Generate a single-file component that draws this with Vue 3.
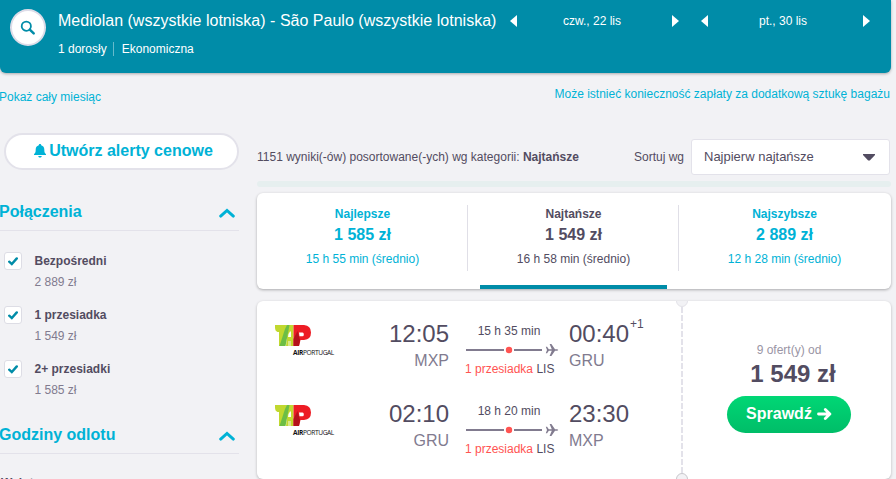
<template>
  <div class="page">
    <header class="search-bar">
      <button class="search-btn" aria-label="Szukaj">
        <svg width="16" height="16" viewBox="0 0 16 16">
          <circle cx="6.3" cy="6.2" r="4.6" fill="none" stroke="#008ca8" stroke-width="1.8" />
          <path d="M9.8 9.7 L13.7 13.4" stroke="#008ca8" stroke-width="2.5" stroke-linecap="round" />
        </svg>
      </button>
      <div class="search-info">
        <div class="route">Mediolan (wszystkie lotniska) - São Paulo (wszystkie lotniska)</div>
        <div class="details">
          <span class="adults">1 dorosły</span>
          <span class="cabin">Ekonomiczna</span>
        </div>
      </div>
      <div class="dates">
        <div v-for="d in dates" :key="d" class="date">
          <svg width="7" height="12" viewBox="0 0 7 12"><path d="M7 0v12L0 6z" fill="#fff" /></svg>
          <span>{{ d }}</span>
          <svg width="7" height="12" viewBox="0 0 7 12"><path d="M0 0v12L7 6z" fill="#fff" /></svg>
        </div>
      </div>
    </header>

    <div class="links">
      <a class="month">Pokaż cały miesiąc</a>
      <a class="baggage">Może istnieć konieczność zapłaty za dodatkową sztukę bagażu</a>
    </div>

    <div class="columns">
      <aside class="sidebar">
        <button class="alert-btn">
          <svg width="12" height="14" viewBox="0 0 12 14">
            <path
              d="M6 0c.8 0 1.2.5 1.2 1.2C9.3 1.8 10.3 3.4 10.3 5.6c0 2.6.4 3.7 1.7 4.6v.9H0v-.9c1.3-.9 1.7-2 1.7-4.6 0-2.2 1-3.8 3.1-4.4C4.8.5 5.2 0 6 0zM4.2 12h3.6c-.3 1-.9 1.5-1.8 1.5S4.5 13 4.2 12z"
              fill="#00b2d6"
            />
          </svg>
          <span>Utwórz alerty cenowe</span>
        </button>

        <section class="filter">
          <div class="filter-head">
            <h3>Połączenia</h3>
            <svg width="16" height="10" viewBox="0 0 16 10">
              <path d="M1.7 8.1 L8 2.5 L14.3 8.1" class="chevron" />
            </svg>
          </div>
          <div v-for="s in stops" :key="s.label" class="option">
            <span class="checkbox">
              <svg width="10" height="9" viewBox="0 0 10 9">
                <path d="M1.2 4.7 L3.8 7.1 L8.8 1.4" fill="none" stroke="#008ca8" stroke-width="2.4" stroke-linecap="round" />
              </svg>
            </span>
            <div>
              <div class="option-label">{{ s.label }}</div>
              <div class="option-price">{{ s.price }}</div>
            </div>
          </div>
        </section>

        <section class="filter times">
          <div class="filter-head">
            <h3>Godziny odlotu</h3>
            <svg width="16" height="10" viewBox="0 0 16 10">
              <path d="M1.7 8.1 L8 2.5 L14.3 8.1" class="chevron" />
            </svg>
          </div>
          <div class="leg">Wylot</div>
        </section>
      </aside>

      <main class="results">
        <div class="toolbar">
          <div class="count">1151 wyniki(-ów) posortowane(-ych) wg kategorii: <b>Najtańsze</b></div>
          <span class="sort-label">Sortuj wg</span>
          <div class="select">
            <span>Najpierw najtańsze</span>
            <svg width="12" height="7" viewBox="0 0 12 7">
              <path d="M0 0h12v1L6.8 6.5h-1.6L0 1z" fill="#524c61" />
            </svg>
          </div>
        </div>
        <div class="progress"></div>

        <div class="tabs">
          <div v-for="t in tabs" :key="t.name" class="tab" :class="{ active: t.active }">
            <div class="tab-name">{{ t.name }}</div>
            <div class="tab-price">{{ t.price }}</div>
            <div class="tab-time">{{ t.time }}</div>
          </div>
        </div>

        <article class="ticket">
          <div class="legs">
            <div v-for="f in flights" :key="f.dep" class="flight">
              <div class="logo">
                <svg width="36" height="21" viewBox="0 0 36 21">
                  <path d="M0 0h13l-3 21H4V7H2.5Q0 6 0 2.5z" fill="#c1d82f" />
                  <path d="M13 0h5.5v21H11z" fill="#c1d82f" />
                  <path d="M10 4L12 0h2.500L10.500 21H4.500z" fill="#6cbe45" />
                  <path d="M13.500 9l1.500-2.500h1V12H13z" fill="#fff" />
                  <path d="M13 16h3v5h-3z" fill="#dbe88a" />
                  <path d="M18.5 0H29q7 .5 7 7.500T29 15h-3.500l-1.500 6h-5.500z" fill="#ed1c24" />
                  <path d="M18.5 14l4-8 2.500 9-1 6h-5.500z" fill="#b5121b" />
                  <path d="M24 7.500h3.500q1.300 0 1.300 1.900t-1.300 1.900H24.500z" fill="#fff" />
                </svg>
                <div class="logo-text"><b>AIR</b>PORTUGAL</div>
              </div>
              <div class="point dep">
                <div class="time">{{ f.dep }}</div>
                <div class="code">{{ f.from }}</div>
              </div>
              <div class="path">
                <div class="duration">{{ f.duration }}</div>
                <svg width="93" height="14" viewBox="0 0 93 14">
                  <path d="M0 7h38M48 7h28" stroke="#817b8f" stroke-width="2" />
                  <circle cx="43" cy="7" r="3.2" fill="#ff5452" />
                  <path
                    d="M79.8 3.8h1.3l1.7 2.500h3L83.600 1h1.800l3.600 5.300H90.800q1.400.1 1.400.7t-1.400.7H89L85.400 13h-1.800l2.200-5.300h-3l-1.700 2.500h-1.300L81 7z"
                    fill="#817b8f"
                  />
                </svg>
                <div class="stop"><span>1 przesiadka</span> LIS</div>
              </div>
              <div class="point arr">
                <div class="time">{{ f.arr }}<sup v-if="f.next">{{ f.next }}</sup></div>
                <div class="code">{{ f.to }}</div>
              </div>
            </div>
          </div>
          <svg class="divider" width="14" height="178" viewBox="0 0 14 178">
            <path d="M7 6V172" stroke="#e3e2ea" stroke-width="2" stroke-dasharray="6 2" />
            <circle cx="7" cy="0" r="5.5" fill="#f2f2f5" stroke="#e3e2e8" />
            <circle cx="7" cy="178" r="5.5" fill="#f2f2f5" stroke="#c8c7cc" />
          </svg>
          <div class="offer">
            <div class="offer-count">9 ofert(y) od</div>
            <div class="offer-price">1 549 zł</div>
            <button class="offer-btn">
              <span>Sprawdź</span>
              <svg width="15" height="12" viewBox="0 0 15 12">
                <path d="M1.5 6h11M8.3 1.5L12.9 6 8.3 10.5" fill="none" stroke="#fff" stroke-width="2.8" stroke-linecap="round" stroke-linejoin="round" />
              </svg>
            </button>
          </div>
        </article>
      </main>
    </div>
  </div>
</template>

<script setup>
const dates = ['czw., 22 lis', 'pt., 30 lis']

const stops = [
  { label: 'Bezpośredni', price: '2 889 zł' },
  { label: '1 przesiadka', price: '1 549 zł' },
  { label: '2+ przesiadki', price: '1 585 zł' },
]

const tabs = [
  { name: 'Najlepsze', price: '1 585 zł', time: '15 h 55 min (średnio)' },
  { name: 'Najtańsze', price: '1 549 zł', time: '16 h 58 min (średnio)', active: true },
  { name: 'Najszybsze', price: '2 889 zł', time: '12 h 28 min (średnio)' },
]

const flights = [
  { dep: '12:05', from: 'MXP', duration: '15 h 35 min', arr: '00:40', next: '+1', to: 'GRU' },
  { dep: '02:10', from: 'GRU', duration: '18 h 20 min', arr: '23:30', to: 'MXP' },
]
</script>

<style>
body {
  background: #f2f2f5;
  overflow: hidden;
}
</style>

<style scoped>
.page {
  height: 479px;
  overflow: hidden;
  font-family: "Liberation Sans", Arial, sans-serif;
  font-size: 12px;
  line-height: 18px;
  color: #524c61;
  background: #f2f2f5;
}

.page svg {
  display: block;
  flex: none;
}

button {
  font-family: inherit;
  padding: 0;
}

/* search bar */
.search-bar {
  display: flex;
  width: 891px;
  height: 73px;
  box-sizing: border-box;
  padding: 9px 21px 0 10px;
  background: #008ca8;
  border-radius: 0 0 6px 6px;
  box-shadow: 0 1px 3px rgba(0, 0, 0, 0.3);
  color: #fff;
}

.search-btn {
  display: flex;
  flex: none;
  align-items: center;
  justify-content: center;
  width: 36px;
  height: 37px;
  border: 2px solid #dddce8;
  border-radius: 50%;
  background: #fff;
}

.search-info {
  width: 452px;
  margin-left: 12px;
}

.route {
  padding-top: 1px;
  font-size: 16px;
  line-height: 22px;
  letter-spacing: 0.015px;
  white-space: nowrap;
}

.details {
  display: flex;
  margin-top: 10px;
  line-height: 14px;
}

.adults {
  padding-right: 6px;
  margin-right: 8px;
  border-right: 1px solid #66bacb;
}

.dates {
  display: flex;
  gap: 22px;
  padding-top: 3px;
}

.date {
  display: flex;
  flex: none;
  align-items: center;
  justify-content: space-between;
  width: 169px;
  height: 18px;
}

.date span {
  margin-right: 5px;
}

/* links */
.links {
  display: flex;
  justify-content: space-between;
  width: 890px;
  height: 60px;
  padding-top: 12px;
  box-sizing: border-box;
  color: #00b2d6;
}

.month {
  padding-top: 3px;
  margin-left: -1px;
}

.columns {
  display: flex;
  gap: 18px;
}

/* sidebar */
.sidebar {
  width: 239px;
  flex: none;
}

.alert-btn {
  display: flex;
  align-items: center;
  justify-content: center;
  gap: 3px;
  width: 235px;
  height: 37px;
  margin-left: 4px;
  padding: 0 0 2px 4px;
  border: 2px solid #e3e2ea;
  border-radius: 19px;
  background: #fff;
  color: #00b2d6;
  font-size: 16px;
  font-weight: bold;
}

.filter {
  margin-top: 30px;
}

.filter-head {
  display: flex;
  align-items: center;
  justify-content: space-between;
  height: 30px;
  padding-right: 4px;
  border-bottom: 1px solid #e3e2ea;
}

.filter-head h3 {
  margin: -6px 0 0 -1px;
  color: #00b2d6;
  font-size: 16px;
  line-height: 22px;
}

.filter-head svg {
  margin-top: -4px;
}

.chevron {
  fill: none;
  stroke: #00b2d6;
  stroke-width: 3;
  stroke-linecap: round;
}

.option {
  display: flex;
  gap: 12.5px;
  height: 54px;
  padding-left: 4px;
}

.filter-head + .option {
  padding-top: 21px;
}

.checkbox {
  display: flex;
  align-items: center;
  justify-content: center;
  width: 16px;
  height: 16px;
  border: 1px solid #dddde5;
  border-radius: 3px;
  background: #fff;
}

.option-label {
  font-weight: bold;
}

.option-price {
  margin-top: 3px;
  color: #817b8f;
}

.times {
  margin-top: 9px;
}

.leg {
  margin: 20px 0 0 1px;
  font-weight: bold;
}

/* results */
.results {
  width: 634px;
}

.toolbar {
  display: flex;
  align-items: center;
  height: 36px;
  padding: 6px 1px 0 0;
}

.count {
  flex: 1;
}

.sort-label {
  margin-right: 7px;
}

.select {
  display: flex;
  align-items: center;
  justify-content: space-between;
  box-sizing: border-box;
  width: 199px;
  height: 36px;
  padding: 0 14px 0 12px;
  border: 1px solid #e3e2ea;
  border-radius: 3px;
  background: #fff;
  font-size: 13px;
}

.progress {
  height: 6px;
  margin-top: 6px;
  border-radius: 3px;
  background: #e6efef;
}

.tabs {
  display: flex;
  height: 96px;
  margin-top: 6px;
  padding-right: 1px;
  box-sizing: border-box;
  border-radius: 6px;
  background: #fff;
  box-shadow: 0 1px 3px rgba(0, 0, 0, 0.3);
}

.tab {
  position: relative;
  flex: 1;
  padding-top: 12px;
  text-align: center;
  color: #00b2d6;
}

.tab + .tab::before {
  content: "";
  position: absolute;
  left: -1px;
  top: 12px;
  width: 1px;
  height: 66px;
  background: #e0dfe7;
}

.tab.active {
  color: #524c61;
}

.tab.active::after {
  content: "";
  position: absolute;
  left: 12px;
  right: 12px;
  bottom: 0;
  height: 4px;
  background: #008ca8;
}

.tab-name {
  font-weight: bold;
}

.tab-price {
  font-size: 16px;
  font-weight: bold;
  line-height: 24px;
}

.tab-time {
  margin-top: 3px;
}

.ticket {
  display: flex;
  height: 178px;
  margin-top: 12px;
  border-radius: 6px;
  background: #fff;
  box-shadow: 0 1px 3px rgba(0, 0, 0, 0.25);
}

.legs {
  width: 418px;
  padding-top: 17px;
}

.flight {
  display: flex;
  height: 80px;
  padding-left: 18px;
}

.logo {
  width: 60px;
  padding-top: 7px;
}

.logo-text {
  margin: 2px 0 0 18px;
  color: #111;
  font-family: "Open Sans", "Noto Sans", sans-serif;
  font-size: 6.6px;
  font-weight: 500;
  line-height: 9px;
  letter-spacing: -0.38px;
}

.point {
  white-space: nowrap;
}

.dep {
  width: 114px;
  text-align: right;
}

.time {
  font-size: 24px;
  line-height: 32px;
}

.time sup {
  position: relative;
  top: -14px;
  margin-left: 1px;
  font-size: 12px;
  line-height: 0;
  vertical-align: baseline;
}

.code {
  margin-top: 1px;
  font-size: 16px;
  line-height: 20px;
  color: #817b8f;
}

.path {
  width: 92px;
  margin: 4px 11px 0 17px;
  white-space: nowrap;
}

.duration {
  width: 86px;
  text-align: center;
}

.path svg {
  margin-top: 3px;
}

.stop {
  margin: 3px 0 0 -1px;
}

.stop span {
  color: #ff5452;
}

.offer {
  display: flex;
  flex: 1;
  flex-direction: column;
  align-items: center;
  padding: 40px 2px 0 0;
}

.offer-count {
  color: #9a95a5;
}

.offer-price {
  margin-left: 8px;
  font-size: 24px;
  font-weight: bold;
  line-height: 30px;
}

.offer-btn {
  display: flex;
  align-items: center;
  justify-content: center;
  gap: 5px;
  width: 124px;
  height: 37px;
  margin-top: 7px;
  padding-bottom: 1px;
  border: 0;
  border-radius: 19px;
  background: linear-gradient(#00d775, #00bd68);
  color: #fff;
  font-size: 16px;
  font-weight: bold;
}
</style>
